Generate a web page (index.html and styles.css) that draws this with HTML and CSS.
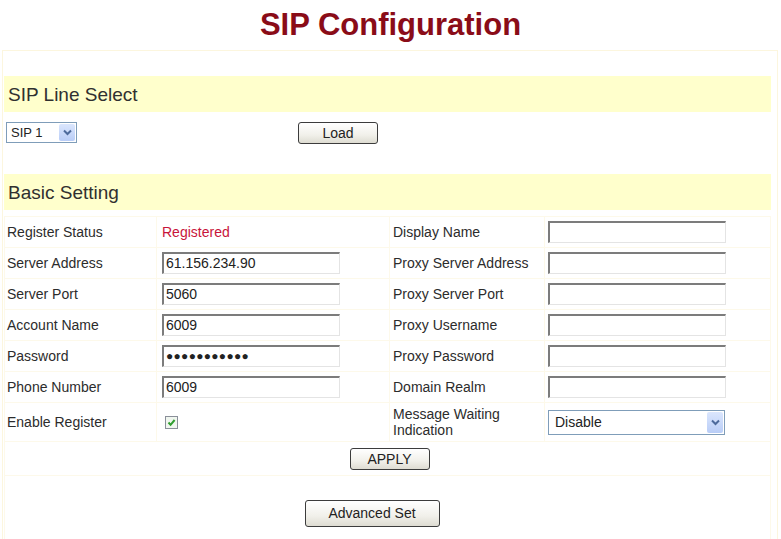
FILE: index.html
```html
<!DOCTYPE html>
<html>
<head>
<meta charset="utf-8">
<title>SIP Configuration</title>
<link rel="stylesheet" href="styles.css">
</head>
<body>
<h1 class="title">SIP Configuration</h1>
<div class="frame">
  <div class="spacer"></div>
  <div class="band">SIP Line Select</div>
  <div class="line-row">
    <div class="select small">
      <span class="sel-text">SIP 1</span>
      <span class="sel-btn"><svg width="9" height="7" viewBox="0 0 9 7"><path d="M1 1.5 L4.5 5 L8 1.5" fill="none" stroke="#4d6a9c" stroke-width="2"/></svg></span>
    </div>
    <button class="btn load">Load</button>
  </div>
  <div class="spacer2"></div>
  <div class="band">Basic Setting</div>
  <table class="form">
    <colgroup><col class="c1"><col class="c2"><col class="c3"><col class="c4"></colgroup>
    <tr>
      <td>Register Status</td>
      <td class="status">Registered</td>
      <td>Display Name</td>
      <td><span class="input"></span></td>
    </tr>
    <tr>
      <td>Server Address</td>
      <td><span class="input">61.156.234.90</span></td>
      <td>Proxy Server Address</td>
      <td><span class="input"></span></td>
    </tr>
    <tr>
      <td>Server Port</td>
      <td><span class="input">5060</span></td>
      <td>Proxy Server Port</td>
      <td><span class="input"></span></td>
    </tr>
    <tr>
      <td>Account Name</td>
      <td><span class="input">6009</span></td>
      <td>Proxy Username</td>
      <td><span class="input"></span></td>
    </tr>
    <tr>
      <td>Password</td>
      <td><span class="input dots">●●●●●●●●●●●</span></td>
      <td>Proxy Password</td>
      <td><span class="input"></span></td>
    </tr>
    <tr>
      <td>Phone Number</td>
      <td><span class="input">6009</span></td>
      <td>Domain Realm</td>
      <td><span class="input"></span></td>
    </tr>
    <tr class="tall">
      <td>Enable Register</td>
      <td><span class="check"><svg width="11" height="11" viewBox="0 0 11 11"><path d="M2.5 5.5 L4.6 7.8 L8.6 3" fill="none" stroke="#2f9e2f" stroke-width="2"/></svg></span></td>
      <td class="two">Message Waiting<br>Indication</td>
      <td>
        <div class="select wide">
          <span class="sel-text">Disable</span>
          <span class="sel-btn"><svg width="9" height="7" viewBox="0 0 9 7"><path d="M1 1.5 L4.5 5 L8 1.5" fill="none" stroke="#4d6a9c" stroke-width="2"/></svg></span>
        </div>
      </td>
    </tr>
    <tr class="apply-row">
      <td colspan="4"><button class="btn apply">APPLY</button></td>
    </tr>
    <tr class="adv-row">
      <td colspan="4"><button class="btn adv">Advanced Set</button></td>
    </tr>
  </table>
</div>
</body>
</html>
```
FILE: styles.css
```css
html, body {
  margin: 0;
  padding: 0;
  background: #ffffff;
  font-family: "Liberation Sans", Arial, sans-serif;
  color: #2a2a2a;
}
.title {
  margin: 8px 0 0;
  text-align: center;
  font-size: 31px;
  line-height: 34px;
  font-weight: bold;
  color: #8a0c18;
}
.frame {
  margin: 8px 3px 0 2px;
  border: 1px solid #fcf6de;
  border-bottom: none;
  padding: 0 6px 0 1px;
}
.spacer { height: 25px; }
.spacer2 { height: 25px; }
.band {
  background: #ffffcc;
  height: 36px;
  line-height: 37px;
  font-size: 19px;
  padding-left: 4px;
  color: #303030;
}
.line-row {
  display: grid;
  grid-template-columns: 292px auto;
  align-items: center;
  height: 37px;
  padding: 4px 0 0 2px;
  box-sizing: border-box;
}
.select {
  display: flex;
  align-items: stretch;
  border: 1px solid #7f9db9;
  background: #fff;
  box-sizing: border-box;
}
.select.small { width: 71px; height: 21px; }
.select.wide { width: 177px; height: 25px; }
.sel-text {
  flex: 1;
  font-size: 13px;
  padding-left: 4px;
  display: flex;
  align-items: center;
  color: #222;
}
.select.wide .sel-text { font-size: 14px; padding-left: 6px; }
.sel-btn {
  width: 16px;
  margin: 1px;
  background: linear-gradient(#dbe6fd, #b9cdf7);
  border-radius: 2px;
  display: flex;
  align-items: center;
  justify-content: center;
}
.btn {
  font-family: "Liberation Sans", Arial, sans-serif;
  font-size: 14px;
  color: #222;
  border: 1px solid #3c3c3c;
  border-radius: 3px;
  background: linear-gradient(#ffffff, #f1f0ea 60%, #dedcd2);
  padding: 0;
  box-sizing: border-box;
}
.btn.load { width: 80px; height: 22px; }
.btn.apply { width: 80px; height: 22px; margin-left: 4px; }
.btn.adv { width: 135px; height: 27px; margin-right: 31px; }
.form {
  width: 100%;
  border-collapse: collapse;
  margin-top: 6px;
  font-size: 14px;
}
.form col.c1 { width: 152px; }
.form col.c2 { width: 233px; }
.form col.c3 { width: 155px; }
.form td {
  border: 1px solid #fdf9ea;
  height: 30px;
  padding: 0 0 0 2px;
  vertical-align: middle;
  color: #2c2c2c;
}
.form td.status { color: #c8143a; padding-left: 6px; }
.form tr td:nth-child(2) { padding-left: 5px; }
.form tr td:nth-child(3) { padding-left: 3px; }
.form tr td:nth-child(4) { padding-left: 3px; }
.input {
  display: block;
  width: 178px;
  height: 22px;
  box-sizing: border-box;
  border-top: 2px solid #7c7c7c;
  border-left: 2px solid #7c7c7c;
  border-right: 1px solid #e4e4e4;
  border-bottom: 1px solid #e4e4e4;
  background: #fff;
  font-size: 14px;
  line-height: 19px;
  padding-left: 2px;
  color: #222;
  white-space: nowrap;
}
.input.dots { font-size: 12px; letter-spacing: 0.3px; }
.form tr.tall td { height: 38px; }
.form td.two { line-height: 16px; }
.check {
  display: flex;
  align-items: center;
  justify-content: center;
  width: 13px;
  height: 13px;
  box-sizing: border-box;
  border: 1px solid #8a8f99;
  background: #f0f6ef;
  margin-left: 3px;
}
.form tr.apply-row td {
  height: 33px;
  text-align: center;
  padding: 0;
}
.form tr.adv-row td {
  height: 62px;
  text-align: center;
  padding: 6px 0 0;
  border-bottom: none;
}
```
